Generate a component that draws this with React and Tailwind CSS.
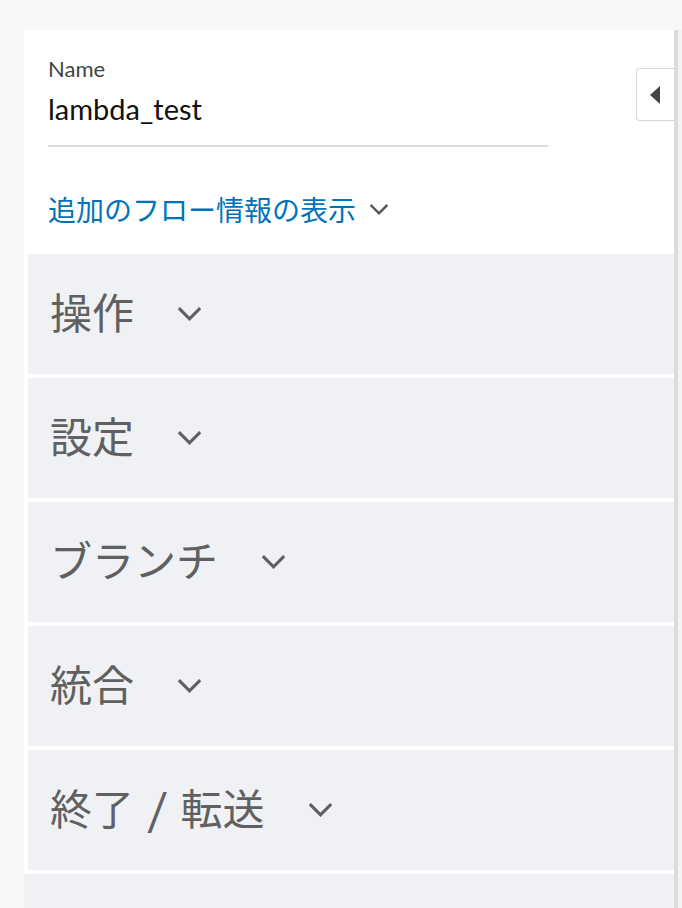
import React from "react";

const jp = { fontFamily: '"Noto Sans CJK JP", "Noto Sans", sans-serif' };

function Chevron({ className }) {
    return (
        <svg viewBox="0 0 24 14" className={className} fill="none">
            <path d="M2 2 L12 12 L22 2" stroke="currentColor" strokeWidth="3.2" strokeLinecap="square" />
        </svg>
    );
}

const sections = [
    ["操作"],
    ["設定"],
    ["ブランチ"],
    ["統合"],
    ["終了", "転送"],
];

export default function App() {
    return (
        <div className="min-h-screen bg-[#f7f7f7] pt-[30px] pl-[24px] flex overflow-hidden">
            {/* Flow panel */}
            <div className="relative w-[650px] bg-white">
                <div className="px-[24px] pt-[24px]" style={{ fontFamily: 'Lato, "Noto Sans", sans-serif' }}>
                    <div className="text-[22px] leading-[30px] text-[#444]">Name</div>
                    <div className="mt-[6px] text-[29px] leading-[38px] text-[#111]">lambda_test</div>
                    <div className="mt-[17px] w-[500px] h-[2px] bg-[#dedede]" />
                </div>

                <button
                    type="button"
                    className="absolute right-0 top-[38px] w-[38px] h-[53px] rounded-l-[4px] border border-r-0 border-[#d5d5d5] bg-white flex items-center justify-center"
                >
                    <svg viewBox="0 0 10 18" className="w-[10px] h-[18px] ml-[-2px]">
                        <path d="M10 0 L10 18 L0 9 Z" fill="#444" />
                    </svg>
                </button>

                <div className="px-[24px] mt-[42px] flex items-center h-[40px]" style={jp}>
                    <span className="text-[28px] leading-[40px] text-[#0073bb]">追加のフロー情報の表示</span>
                    <Chevron className="ml-[14px] w-[18px] h-[11px] text-[#555]" />
                </div>

                {/* Collapsible groups */}
                <div className="mt-[25px] flex flex-col gap-[4px]">
                    {sections.map((parts) => (
                        <div key={parts.join("/")} className="ml-[4px] h-[120px] bg-[#eff1f5] flex items-center pl-[22px] pb-[6px]" style={jp}>
                            <span className="text-[42px] leading-[50px] text-[#606060]">
                                {parts[0]}
                                {parts[1] && (
                                    <>
                                        <span className="inline-block mx-[15px] scale-x-[1.25]">/</span>
                                        {parts[1]}
                                    </>
                                )}
                            </span>
                            <Chevron className="ml-[44px] mt-[6px] w-[23px] h-[14px] text-[#606060]" />
                        </div>
                    ))}
                    <div className="h-[120px] bg-[#eff1f5]" />
                </div>
            </div>

            {/* Scroll gutter */}
            <div className="w-[4px] bg-[#dcdcdc]" />
            <div className="w-[4px] bg-[#f3f3f3]" />
        </div>
    );
}
